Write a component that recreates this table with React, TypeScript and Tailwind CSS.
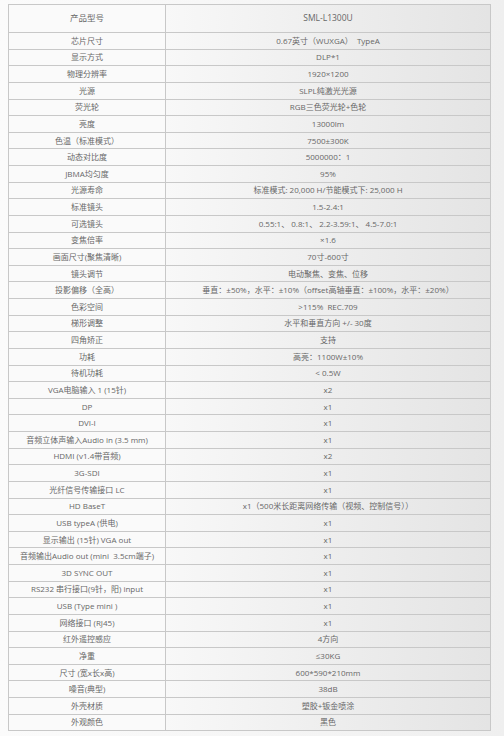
const sp = '\u00a0';

const rows: [string, string][] = [
  ['芯片尺寸', '0.67英寸（WUXGA）  TypeA'],
  ['显示方式', 'DLP*1'],
  ['物理分辨率', '1920×1200'],
  ['光源', 'SLPL纯激光光源'],
  ['荧光轮', 'RGB三色荧光轮+色轮'],
  ['亮度', '13000lm'],
  ['色温（标准模式）', '7500±300K'],
  ['动态对比度', '5000000：1'],
  ['JBMA均匀度', '95%'],
  ['光源寿命', '标准模式: 20,000 H/节能模式下: 25,000 H'],
  ['标准镜头', '1.5-2.4:1'],
  ['可选镜头', `0.55:1、${sp}0.8:1、${sp}2.2-3.59:1、${sp}4.5-7.0:1`],
  ['变焦倍率', '×1.6'],
  ['画面尺寸(聚焦清晰)', '70寸-600寸'],
  ['镜头调节', '电动聚焦、变焦、位移'],
  ['投影偏移（全高）', '垂直：±50%，水平：±10%（offset高轴垂直：±100%，水平：±20%）'],
  ['色彩空间', `>115%${sp}${sp}REC.709`],
  ['梯形调整', '水平和垂直方向 +/- 30度'],
  ['四角矫正', '支持'],
  ['功耗', '高亮：1100W±10%'],
  ['待机功耗', '< 0.5W'],
  ['VGA电脑输入 1 (15针)', 'x2'],
  ['DP', 'x1'],
  ['DVI-I', 'x1'],
  ['音频立体声输入Audio in (3.5 mm)', 'x1'],
  ['HDMI (v1.4带音频)', 'x2'],
  ['3G-SDI', 'x1'],
  ['光纤信号传输接口 LC', 'x1'],
  ['HD BaseT', 'x1（500米长距离网络传输（视频、控制信号））'],
  ['USB typeA (供电)', 'x1'],
  ['显示输出 (15针) VGA out', 'x1'],
  ['音频输出Audio out (mini  3.5cm端子)', 'x1'],
  ['3D SYNC OUT', 'x1'],
  ['RS232 串行接口(9针，阳) input', 'x1'],
  ['USB (Type mini )', 'x1'],
  ['网络接口 (RJ45)', 'x1'],
  ['红外遥控感应', '4方向'],
  ['净重', '≤30KG'],
  ['尺寸 (宽x长x高)', '600*590*210mm'],
  ['噪音(典型)', '38dB'],
  ['外壳材质', '塑胶+钣金喷涂'],
  ['外观颜色', '黑色'],
];

export default function App() {
  return (
    <div
      className="w-[504px] h-[736px] pl-[8px] pt-[4px] bg-gradient-to-r from-[#fbfbfb] via-[#f6f6f6] to-[#efefef] text-[#676767]"
      style={{ fontFamily: '"Open Sans", "Noto Sans CJK SC", sans-serif' }}
    >
      <div className="w-[483px] h-[727px] flex flex-col border border-[#c8c8c8]">
        <div className="h-[27px] shrink-0 grid grid-cols-[157px_1fr] text-[8.5px]">
          <div className="flex items-center justify-center border-r border-[#c8c8c8] bg-[#fafafa]">产品型号</div>
          <div className="flex items-center justify-center bg-gradient-to-r from-[#f8f8f8] to-[#e4e4e4]">SML-L1300U</div>
        </div>
        {rows.map(([k, v]) => (
          <div key={k} className="flex-1 min-h-0 grid grid-cols-[157px_1fr] border-t border-[#c8c8c8] text-[8px] leading-none">
            <div className="flex items-center justify-center border-r border-[#c8c8c8] bg-[#fafafa] whitespace-pre">{k}</div>
            <div className="flex items-center justify-center bg-gradient-to-r from-[#f8f8f8] to-[#e4e4e4] whitespace-pre">{v}</div>
          </div>
        ))}
      </div>
    </div>
  );
}
